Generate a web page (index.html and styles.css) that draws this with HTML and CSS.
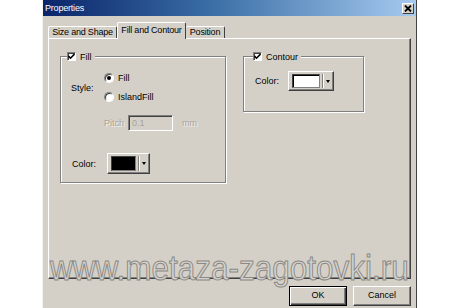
FILE: index.html
```html
<!DOCTYPE html>
<html lang="en">

<head>
    <meta charset="UTF-8">
    <meta name="viewport" content="width=device-width, initial-scale=1.0">
    <title>Properties</title>
    <link rel="stylesheet" href="styles.css">
</head>

<body>
    <div class="dialog">
        <div class="titlebar">
            <span class="title">Properties</span>
            <span class="close-btn">
                <svg width="8" height="7" viewBox="0 0 8 7">
                    <path d="M1 0.5 L7 6.5 M7 0.5 L1 6.5" stroke="#000" stroke-width="1.8" fill="none" />
                </svg>
            </span>
        </div>

        <div class="tabs">
            <div class="tab tab-size">Size and Shape</div>
            <div class="tab tab-fill active">Fill and Contour</div>
            <div class="tab tab-pos">Position</div>
        </div>

        <div class="panel">
            <div class="group group-fill">
                <div class="legend">
                    <span class="check">
                        <svg width="7" height="7" viewBox="0 0 7 7">
                            <path d="M0.5 3 L2.5 5.2 L6.5 1" stroke="#000" stroke-width="1.6" fill="none" />
                        </svg>
                    </span>
                    Fill
                </div>

                <div class="style-row">
                    <span class="label label-style">Style:</span>
                    <div class="radios">
                        <div class="radio-line"><span class="radio on"></span>Fill</div>
                        <div class="radio-line"><span class="radio"></span>IslandFill</div>
                    </div>
                </div>

                <div class="pitch-row">
                    <span class="disabled pitch-label">Pitch</span>
                    <span class="pitch-input">0.1</span>
                    <span class="disabled">mm</span>
                </div>

                <div class="color-row">
                    <span class="label label-color">Color:</span>
                    <span class="color-btn">
                        <span class="swatch black"></span>
                        <span class="arrow"></span>
                    </span>
                </div>
            </div>

            <div class="group group-contour">
                <div class="legend">
                    <span class="check">
                        <svg width="7" height="7" viewBox="0 0 7 7">
                            <path d="M0.5 3 L2.5 5.2 L6.5 1" stroke="#000" stroke-width="1.6" fill="none" />
                        </svg>
                    </span>
                    Contour
                </div>

                <div class="color-row contour-color">
                    <span class="label label-color2">Color:</span>
                    <span class="color-btn wide">
                        <span class="swatch white"></span>
                        <span class="arrow"></span>
                    </span>
                </div>
            </div>
        </div>

        <div class="buttons">
            <button class="btn default">OK</button>
            <button class="btn">Cancel</button>
        </div>

        <div class="watermark">www.metaza-zagotovki.ru</div>
    </div>
</body>

</html>
```

FILE: styles.css
```css
body {
    margin: 0;
    background-color: #ffffff;
    font-family: "Liberation Sans", Arial, sans-serif;
    font-size: 9px;
    color: #000;
}

.dialog {
    position: relative;
    margin-left: 42px;
    width: 375px;
    height: 320px;
    box-sizing: border-box;
    background-color: #d4d0c8;
    border-left: 1px solid #f4f2ee;
    border-right: 1px solid #404040;
    overflow: hidden;
}

.titlebar {
    height: 16px;
    display: flex;
    align-items: center;
    justify-content: space-between;
    padding-left: 2px;
    background: linear-gradient(to right, #0a246a, #3a6ea5 45%, #a6caf0);
    color: #fff;
}

.title {
    letter-spacing: -0.2px;
}

.close-btn {
    width: 10px;
    height: 9px;
    margin-right: 2px;
    display: flex;
    align-items: center;
    justify-content: center;
    background-color: #d4d0c8;
    border: 1px solid;
    border-color: #fff #404040 #404040 #fff;
}

/* pestañas */
.tabs {
    display: flex;
    align-items: flex-end;
    height: 16px;
    margin-top: 6px;
    padding-left: 5px;
}

.tab {
    box-sizing: border-box;
    height: 12px;
    line-height: 11px;
    text-align: center;
    border: 1px solid;
    border-bottom: none;
    border-color: #fff #404040 #fff #fff;
    border-radius: 2px 2px 0 0;
    letter-spacing: -0.2px;
}

.tab-size {
    width: 69px;
}

.tab-fill {
    width: 69px;
}

.tab-pos {
    width: 39px;
    border-left: none;
}

.tab.active {
    height: 17px;
    margin-bottom: -1px;
    line-height: 14px;
    position: relative;
    z-index: 1;
    background-color: #d4d0c8;
}

.panel {
    display: flex;
    align-items: flex-start;
    gap: 17px;
    margin-left: 5px;
    width: 363px;
    height: 241px;
    box-sizing: border-box;
    padding: 17px 0 0 11px;
    border: 1px solid;
    border-color: #fff #404040 #404040 #fff;
    box-shadow: inset -1px -1px 0 #808080;
}

/* grupos */
.group {
    box-sizing: border-box;
    border: 1px solid #808080;
    box-shadow: inset 1px 1px 0 #fff, 1px 1px 0 #fff;
}

.group-fill {
    width: 166px;
    padding-bottom: 8px;
}

.group-contour {
    width: 121px;
    padding-bottom: 20px;
}

.legend {
    display: flex;
    align-items: center;
    gap: 4px;
    width: fit-content;
    height: 11px;
    margin-top: -6px;
    margin-left: 6px;
    padding: 0 3px 0 0;
    background-color: #d4d0c8;
}

.group-contour .legend {
    margin-left: 9px;
}

.check {
    width: 9px;
    height: 9px;
    box-sizing: border-box;
    display: flex;
    align-items: center;
    justify-content: center;
    background-color: #fff;
    border: 1px solid;
    border-color: #808080 #fff #fff #808080;
    box-shadow: inset 1px 1px 0 #404040;
}

.style-row {
    display: flex;
    align-items: center;
    margin-top: 10px;
}

.label-style {
    width: 33px;
    padding-left: 10px;
}

.radios {
    display: flex;
    flex-direction: column;
    gap: 7px;
}

.radio-line {
    display: flex;
    align-items: center;
    gap: 4px;
    height: 12px;
}

.radio {
    width: 10px;
    height: 10px;
    box-sizing: border-box;
    border-radius: 50%;
    background-color: #fff;
    border: 1px solid;
    border-color: #808080 #fff #fff #808080;
    box-shadow: inset 1px 1px 0 #404040;
    display: flex;
    align-items: center;
    justify-content: center;
}

.radio.on::after {
    content: "";
    width: 4px;
    height: 4px;
    border-radius: 50%;
    background-color: #000;
}

.pitch-row {
    display: flex;
    align-items: center;
    margin-top: 12px;
    padding-left: 43px;
    height: 16px;
}

.disabled {
    color: #a8a49c;
    text-shadow: 1px 1px 0 #f4f2ee;
}

.pitch-label {
    width: 24px;
}

.pitch-input {
    width: 45px;
    height: 16px;
    box-sizing: border-box;
    margin-right: 9px;
    padding: 2px 0 0 3px;
    color: #a8a49c;
    border: 1px solid;
    border-color: #808080 #fff #fff #808080;
    box-shadow: inset 1px 1px 0 #404040;
}

.color-row {
    display: flex;
    align-items: center;
    margin-top: 22px;
}

.contour-color {
    margin-top: 9px;
}

.label-color {
    width: 35px;
    padding-left: 11px;
}

.label-color2 {
    width: 33px;
    padding-left: 11px;
}

.color-btn {
    display: flex;
    width: 43px;
    height: 21px;
    box-sizing: border-box;
    padding: 2px 1px 2px 3px;
    border: 1px solid;
    border-color: #fff #404040 #404040 #fff;
    box-shadow: inset -1px -1px 0 #808080;
}

.color-btn.wide {
    width: 46px;
    height: 20px;
}

.swatch {
    flex: 1;
    border: 1px solid;
    border-color: #404040 #808080 #808080 #404040;
    box-shadow: inset 1px 1px 0 #000;
}

.swatch.black {
    background-color: #000;
}

.swatch.white {
    background-color: #fff;
}

.arrow {
    width: 9px;
    display: flex;
    align-items: center;
    justify-content: center;
    margin-left: 2px;
    border-left: 1px solid #808080;
    box-shadow: inset 1px 0 0 #fff;
}

.arrow::after {
    content: "";
    border-left: 2px solid transparent;
    border-right: 2px solid transparent;
    border-top: 3px solid #000;
}

/* botones */
.buttons {
    display: flex;
    justify-content: flex-end;
    gap: 6px;
    margin-top: 7px;
    padding-right: 5px;
}

.btn {
    width: 58px;
    height: 20px;
    padding: 0 0 3px 0;
    font-family: inherit;
    font-size: 9px;
    background-color: #d4d0c8;
    border: 1px solid;
    border-color: #fff #404040 #404040 #fff;
    box-shadow: inset -1px -1px 0 #808080;
}

.btn.default {
    border: 1px solid #000;
    box-shadow: inset 1px 1px 0 #fff, inset -1px -1px 0 #404040, inset -2px -2px 0 #808080;
}

.watermark {
    position: absolute;
    left: 7px;
    top: 250px;
    font-size: 35px;
    line-height: 35px;
    white-space: nowrap;
    color: #d6d3cd;
    -webkit-text-stroke: 1px #8a8884;
    transform: scaleX(0.9);
    transform-origin: left top;
}
```
